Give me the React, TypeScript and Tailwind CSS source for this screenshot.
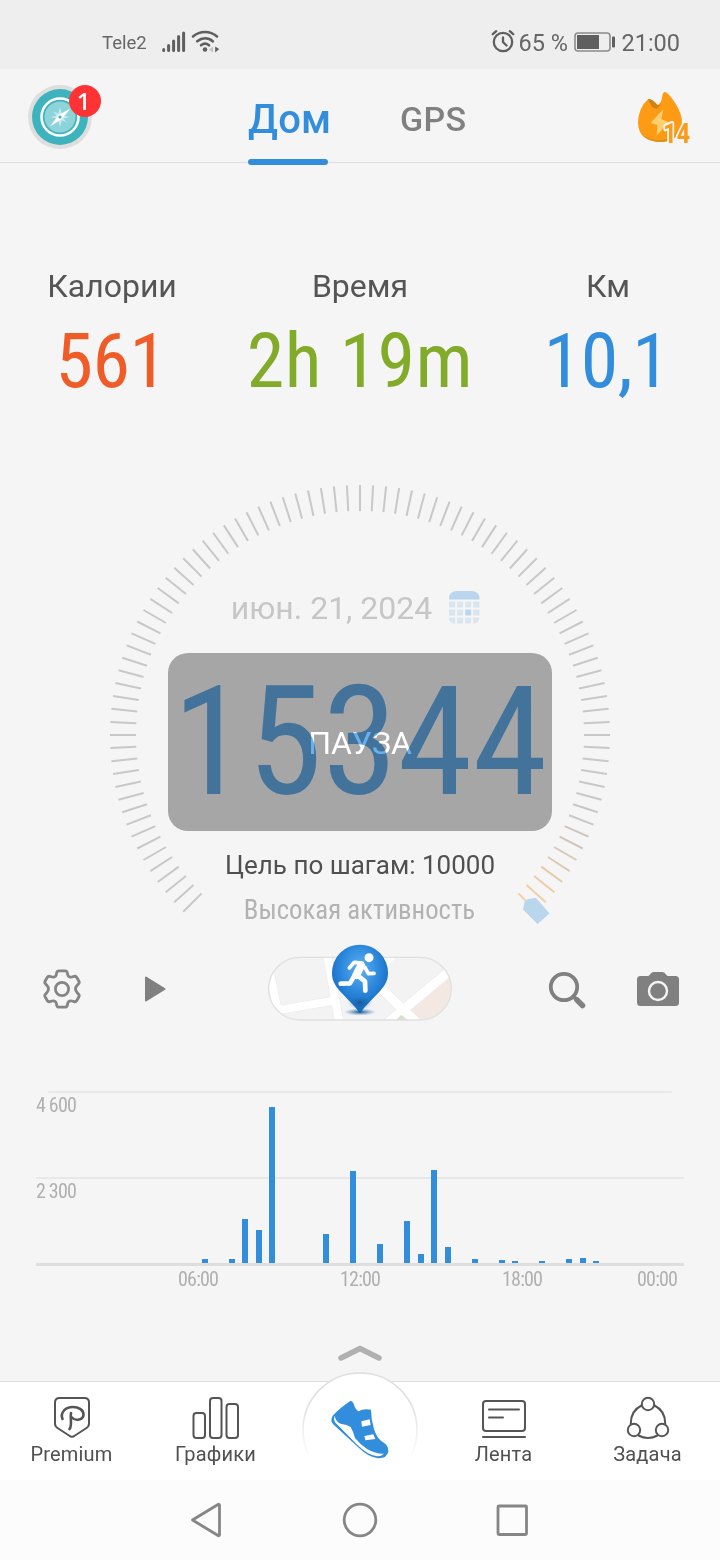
import React from 'react';

const TICKS = Array.from({ length: 91 }, (_, i) => -135 + i * 3);

// last ticks of the dial fade from grey to orange
const WARM = ['#cdc5be', '#d3c6b9', '#d8c8b5', '#dec9b1', '#e5cbad', '#ebcda9', '#f0cea6', '#f5d0a2'];

// half-hour slot -> bar height
const STEPS: Record<number, number> = {
  12: 4, 14: 4, 15: 44, 16: 33, 17: 156, 21: 29, 23: 92, 25: 19, 27: 42, 28: 9,
  29: 93, 30: 16, 32: 4, 34: 3, 35: 2, 37: 2, 39: 4, 40: 5, 41: 2,
};

const tickColor = (i: number) => (i > 82 ? WARM[i - 83] : '#c8c8c8');

const StatusBar = () => (
  <div className="flex h-[69px] bg-[#eeeeee] pt-[16px] text-[#666666]">
    <div className="flex h-[53px] w-full items-center pl-[102px] pr-[40px]">
      <span className="mt-[2px] w-[60px] text-[18.500px]">Tele2</span>
      <svg width="58" height="24" viewBox="0 0 58 24" className="-mt-[4px]">
        <g stroke="#5f5f5f" strokeWidth="3" strokeLinecap="round">
          <path d="M1.700 20.500v1M6.600 16.500v5M11.600 12v9.500M16.600 7.500v14M21.600 4v17.500" />
        </g>
        <g fill="none" stroke="#5f5f5f" strokeWidth="2.600" strokeLinecap="round">
          <path d="M31 7.500c7-6 17-6 24 0M35.200 12.300c5-4 11-4 15.600 0M39 16.300c2.600-2 5.600-2 8 0" />
        </g>
        <circle cx="43" cy="20.500" r="2.300" fill="#5f5f5f" />
        <path d="M51 17.500v6l-4-3z" fill="#c4c4c4" />
        <path d="M53.200 17.500v6l4-3.500z" fill="#5f5f5f" />
      </svg>
      <svg className="ml-auto -mt-[3px]" width="24" height="24" viewBox="0 0 24 24" fill="none" stroke="#5f5f5f" strokeWidth="2.300" strokeLinecap="round">
        <circle cx="12" cy="13" r="9.200" />
        <path d="M12 8.500v4.500l3.500 3.500M1.800 5.200l3.400-3M22.200 5.200l-3.400-3" />
      </svg>
      <span className="ml-[3px] w-[56px] whitespace-nowrap text-[23.500px] leading-[28px]">65 %</span>
      <svg className="-mt-[1px]" width="42" height="20" viewBox="0 0 42 20">
        <rect x="1" y="1" width="35" height="18" rx="3" fill="none" stroke="#8b8b8b" strokeWidth="1.600" />
        <rect x="3" y="3" width="22" height="14" fill="#5f5f5f" />
        <rect x="38" y="4.500" width="3" height="11" rx="1" fill="#5f5f5f" />
      </svg>
      <span className="ml-[5px] text-[23.500px] leading-[28px]">21:00</span>
    </div>
  </div>
);

const Avatar = () => (
  <svg width="76" height="68" viewBox="0 0 76 68">
    <circle cx="32" cy="34" r="32" fill="#dedede" />
    <circle cx="32" cy="34" r="28" fill="#3db3be" />
    <circle cx="32" cy="34" r="18.500" fill="#3db3be" stroke="#ffffff" strokeWidth="2.600" />
    <circle cx="32" cy="34" r="15.500" fill="#8cd4da" />
    <path d="M32 24.500l1.800 6 4.700-1.700-3 4 6 1.200-6 1.400 3 3.700-4.700-1.500-1.800 6.400-1.800-6.400-4.700 1.500 3-3.700-6-1.400 6-1.200-3-4 4.700 1.700z" fill="#c4eaed" />
    <path d="M42.500 25.500L34 36l-12 7.500L30.500 32z" fill="#ffffff" />
    <circle cx="32" cy="34" r="1.600" fill="#3db3be" />
    <circle cx="57" cy="18" r="16" fill="#ff3333" />
    <text x="55.500" y="26.500" textAnchor="middle" fontSize="24" fontWeight="600" fill="#ffffff" className="font-['Open_Sans']">1</text>
  </svg>
);

const Streak = () => (
  <svg width="56" height="62" viewBox="0 0 168 186">
    <path d="M87 9q10 2 30 32q21 32 21 60q-6 57-66 58q-64-3-66-58q1-45 31-71q10-2 28 18q12-7 14-27q1-11 8-12z" fill="#fd9b14" transform="translate(0 -6)" />
    <path d="M6 100q2 50 60 53q50 0 71-45q-8 50-65 51q-64-3-66-59z" fill="#dd921f" transform="translate(0 -6)" />
    <path d="M37 24q6 26 24 29q10-5 15-14q-6 5-11 4q-18-22-28-19z" fill="#cf8114" />
    <path d="M82 55l-38 40 20 7-2 32 36-40-22-10z" fill="#ffd070" />
    <text x="82" y="155" fontSize="84" fontWeight="800" textLength="80" lengthAdjust="spacingAndGlyphs" fill="#f89c1c" stroke="#f5f5f5" strokeWidth="12" strokeLinejoin="round" className="font-[Roboto] [paint-order:stroke]">14</text>
  </svg>
);

const Header = () => (
  <header className="flex h-[94px] border-b border-[#dedede] pl-[28px]">
    <div className="mt-[14px] w-[220px]">
      <Avatar />
    </div>
    <div className="flex h-[96px] w-[80px] flex-col justify-between whitespace-nowrap">
      <span className="mt-[27px] text-[40px] font-medium leading-[48px] tracking-[0.2px] text-[#328edc]">Дом</span>
      <span className="h-[6px] w-[80px] rounded-full bg-[#328edc]" />
    </div>
    <span className="ml-[72px] mt-[30px] w-[236px] text-[34px] font-medium leading-[40px] tracking-[0.3px] text-[#808080]">GPS</span>
    <div className="mt-[22px]">
      <Streak />
    </div>
  </header>
);

const Stat = ({ label, value, className }: { label: string; value: string; className: string }) => (
  <div className="flex flex-col items-center whitespace-nowrap">
    <span className="text-[32px] leading-[40px] text-[#555555]">{label}</span>
    <span className={`mt-[10px] font-['Roboto_Condensed'] text-[76px] leading-[90px] ${className}`}>{value}</span>
  </div>
);

const CalendarIcon = () => (
  <svg width="31" height="33" viewBox="0 0 31 33" className="-mt-[2px]">
    <path d="M0 8.500V8q0-8 8-8h14.500q8 0 8 8v.5z" fill="#bad6ed" />
    <g fill="#d9e5ef">
      <path d="M0 10.500h6.200v6H0zM8.200 10.500h6v6h-6zM16.200 10.500h6v6h-6zM24.200 10.500h6.300v6h-6.300zM0 18.500h6.200v6H0zM8.200 18.500h6v6h-6zM24.200 18.500h6.300v6h-6.300zM0 26.500h6.200v6q-6 0-6.200-6zM8.200 26.500h6v6h-6zM16.200 26.500h6v6h-6zM24.200 26.500h6.300q-.3 6-6.300 6z" />
    </g>
    <path d="M16.200 18.500h6v6h-6z" fill="#bad6ed" />
  </svg>
);

const Dial = () => (
  <section className="relative mx-auto flex h-[445px] w-[500px] flex-col items-center">
    <svg className="absolute inset-0" width="500" height="445" viewBox="0 0 500 445">
      {TICKS.map((deg, i) => (
        <line key={deg} x1="250" y1="0" x2="250" y2="26" stroke={tickColor(i)} strokeWidth="2" transform={`rotate(${deg} 250 250)`} />
      ))}
      <path d="M415 417l3-2.500 8-1 13 15-11.500 10-14-14z" fill="#bad6ed" stroke="#bad6ed" strokeWidth="1" />
    </svg>
    <div className="mt-[103px] flex items-center gap-[17px] whitespace-nowrap pr-[9px]">
      <span className="text-[32px] leading-[40px] text-[#c6c6c6]">июн. 21, 2024</span>
      <CalendarIcon />
    </div>
    <button className="relative mt-[25px] flex h-[178px] w-[384px] items-center justify-center rounded-[20px] bg-[#a6a6a6]">
      <span className="mt-[2px] text-[32px] text-white">ПАУЗА</span>
      <span className="absolute inset-x-0 top-0 text-center font-['Roboto_Condensed'] text-[152px] leading-[178px] text-[#67b1ee] mix-blend-multiply">
        15344
      </span>
    </button>
    <span className="mt-[18px] whitespace-nowrap text-[26px] leading-[32px] text-[#505050]">Цель по шагам: 10000</span>
    <span className="mt-[13px] whitespace-nowrap pr-[1px] font-['Roboto_Condensed'] text-[26.800px] leading-[32px] text-[#b2b2b2]">Высокая активность</span>
  </section>
);

const MapButton = () => (
  <svg width="200" height="90" viewBox="0 0 600 270">
    <defs>
      <clipPath id="pill"><rect x="26" y="52" width="548" height="188" rx="94" /></clipPath>
      <radialGradient id="pin" cx="0.5" cy="0.35" r="0.7">
        <stop offset="0" stopColor="#5fb2f2" />
        <stop offset="0.5" stopColor="#2b87dc" />
        <stop offset="1" stopColor="#0c5cb0" />
      </radialGradient>
      <radialGradient id="shade">
        <stop offset="0" stopColor="#0d3f73" stopOpacity="0.9" />
        <stop offset="1" stopColor="#2f80c8" stopOpacity="0" />
      </radialGradient>
    </defs>
    <rect x="26" y="52" width="548" height="188" rx="94" fill="#f3f3f3" />
    <g clipPath="url(#pill)">
      <path d="M448 212L580 104v140H478z" fill="#f3e9e2" />
      <g fill="none" stroke="#e9e9e9">
        <path d="M26 82l30 145M56 210l160-27M202 45l36 205" strokeWidth="28" />
        <path d="M572 90L386 246M350 132l124 120" strokeWidth="31" />
      </g>
      <g fill="none" stroke="#ffffff">
        <path d="M26 82l30 145M56 210l160-27M202 45l36 205" strokeWidth="25" />
        <path d="M572 90L386 246M350 132l124 120M350 90l50-50" strokeWidth="28" />
      </g>
      <path d="M402 246l22-22 22 22z" fill="#d5e2c5" />
    </g>
    <rect x="26" y="52" width="548" height="188" rx="94" fill="none" stroke="#e0e0e0" strokeWidth="4" />
    <ellipse cx="300" cy="216" rx="48" ry="11" fill="url(#shade)" />
    <path d="M300 14a84 84 0 0 1 84 86c0 45-40 62-84 120c-44-58-84-75-84-120a84 84 0 0 1 84-86z" fill="url(#pin)" />
    <ellipse cx="300" cy="188" rx="38" ry="22" fill="url(#shade)" opacity="0.6" />
    <circle cx="327" cy="53" r="13.500" fill="#ffffff" />
    <g fill="none" stroke="#ffffff" strokeLinecap="round" strokeLinejoin="round">
      <path d="M268 84l15-17 24 2M315 82l10 19 17-1" strokeWidth="11" />
      <path d="M303 77l-14 28" strokeWidth="24" />
      <path d="M284 106l-14 24-28 1M292 106l23 18 1 28" strokeWidth="14" />
    </g>
  </svg>
);

const Toolbar = () => (
  <div className="flex h-[100px] items-center pt-[18px]">
    <svg className="ml-[42px]" width="40" height="40" viewBox="0 0 40 40" fill="none" stroke="#858585" strokeWidth="2.800" strokeLinejoin="round">
      <path d="M14.600 4Q15 1.800 17 1.800h6Q25 1.800 25.400 4l.3 1.800q.3 1.600 1.800 2.100 1.100.4 2.500.1l2-.6q1.900-.5 2.800 1.100l2 3.500q1 1.700-.4 3l-1.200 1.300q-1.700 1.900-1.700 3.700t1.700 3.700l1.200 1.300q1.400 1.300.4 3l-2 3.500q-.9 1.600-2.800 1.100l-2-.6q-1.400-.3-2.500.1-1.500.5-1.800 2.100L25.400 36q-.4 2.200-2.400 2.200h-6q-2 0-2.400-2.200l-.3-1.800q-.3-1.600-1.800-2.100-1.100-.4-2.500-.1l-2 .6q-1.900.5-2.800-1.100l-2-3.500q-1-1.700.4-3l1.200-1.300q1.700-1.900 1.700-3.700t-1.700-3.700l-1.200-1.300q-1.400-1.300-.4-3l2-3.500q.9-1.600 2.800-1.100l2 .6q1.400.3 2.500-.1 1.500-.5 1.800-2.100z" />
      <circle cx="20" cy="20" r="6.600" />
    </svg>
    <svg className="ml-[61px]" width="24" height="28" viewBox="0 0 24 28">
      <path d="M3 2.500l18.500 11.500L3 25.500z" fill="#808080" stroke="#808080" strokeWidth="2" strokeLinejoin="round" />
    </svg>
    <div className="-mt-[9px] ml-[93px]">
      <MapButton />
    </div>
    <svg className="ml-[88px]" width="40" height="40" viewBox="0 0 40 40" fill="none" stroke="#808080">
      <circle cx="16" cy="18" r="13.200" strokeWidth="3.800" />
      <path d="M25 27l3 3" strokeWidth="4" />
      <path d="M29 31l5.500 5.500" strokeWidth="5.500" strokeLinecap="round" />
    </svg>
    <svg className="ml-[49px]" width="42" height="36" viewBox="0 0 42 36">
      <path d="M3.500 5h7q1.500 0 2.500-1.500Q14.300 1 16.500 1h9q2.200 0 3.500 2.500Q30 5 31.500 5h7Q42 5 42 8.500v23q0 3.500-3.500 3.500h-35Q0 35 0 31.500v-23Q0 5 3.500 5z" fill="#808080" />
      <circle cx="21" cy="20" r="9" fill="none" stroke="#f5f5f5" strokeWidth="2.400" />
    </svg>
  </div>
);

const Chart = () => (
  <section className="mx-[36px] mt-[61px] font-['Roboto_Condensed'] text-[20px] leading-[24px] tracking-[-0.800px] text-[#b0b0b0]">
    <div className="grid">
      <div className="col-start-1 row-start-1 h-[172px]">
        <div className="mx-[12px] h-[2px] rounded-full bg-[#e8e8e8]" />
        <p className="h-[84px]">4 600</p>
        <div className="h-[2px] bg-[#e8e8e8]" />
        <p>2 300</p>
      </div>
      <div className="col-start-1 row-start-1 flex h-[172px] items-end">
        {Array.from({ length: 48 }, (_, i) => (
          <div key={i} className="w-[13.500px] pl-[3.500px]">
            <div className="w-[6px] bg-[#328edc]" style={{ height: STEPS[i] ?? 0 }} />
          </div>
        ))}
      </div>
    </div>
    <div className="h-[3px] bg-[#dedede]" />
    <div className="mt-[1px] flex pl-[142px]">
      <span className="w-[162px]">06:00</span>
      <span className="w-[162px]">12:00</span>
      <span className="w-[135px]">18:00</span>
      <span>00:00</span>
    </div>
  </section>
);

const NavItem = ({ label, children }: { label: string; children: React.ReactNode }) => (
  <button className="flex w-[144px] flex-col items-center pt-[14px] text-[#505050]">
    <svg width="48" height="44" viewBox="-2 0 48 44" fill="none" stroke="#555555" strokeWidth="2" strokeLinecap="round" strokeLinejoin="round">
      {children}
    </svg>
    <span className="mt-[2px] pr-[1px] text-[20px] leading-[24px] tracking-[0.200px]">{label}</span>
  </button>
);

const Shoe = () => (
  <svg width="120" height="110" viewBox="0 0 360 330">
    <defs>
      <linearGradient id="rim" x1="0" y1="0" x2="0" y2="1">
        <stop offset="0" stopColor="#dedede" />
        <stop offset="0.3" stopColor="#e2e2e2" />
        <stop offset="0.75" stopColor="#ffffff" />
      </linearGradient>
    </defs>
    <circle cx="180" cy="195" r="171" fill="#ffffff" stroke="url(#rim)" strokeWidth="5" />
    <path d="M152 107q6 1 9 9q4 16 14 23q4 0 8-4q16-4 30-1q0 28 9 58q8 28 26 39q18 10 17 28q-4 22-30 21q-28-2-58-31l-76-70q-12-12-3-27q22-24 54-45z" fill="#328edc" />
    <path d="M104 152q4 20 20 25q18 2 28 9q8 14 13 33q16 20 36 33q26 15 51 14q-8 8-20 8q-28-2-62-36l-65-66q-6-10-1-20z" fill="#ffffff" />
    <path d="M184 169l25-6 3 17-26 5zM193 213l27-5 6 14-30 4z" fill="#ffffff" />
  </svg>
);

const BottomNav = () => (
  <nav className="relative flex h-[99px] border-t border-[#dedede] bg-white">
    <NavItem label="Premium">
      <path d="M9.500 2h25Q39 2 39 6.500v21q0 3-2.500 4.500L25 39.500q-3 2.500-6 0L7.500 32Q5 30.500 5 27.500v-21Q5 2 9.500 2z" />
      <path d="M12.500 23C10 17 15 11 23 11c6 0 10.500 3 10.500 7.500 0 5.500-8 7-11.500 3M21 17c-1 5 1.500 13-1.500 16" strokeWidth="2.600" />
    </NavItem>
    <NavItem label="Графики">
      <rect x="-.5" y="17" width="11.500" height="25" rx="3" />
      <rect x="16" y="2" width="11.500" height="40" rx="3" />
      <rect x="32.500" y="8" width="11.500" height="34" rx="3" />
    </NavItem>
    <div className="w-[144px]" />
    <NavItem label="Лента">
      <rect x="1" y="5" width="42" height="30" rx="3" />
      <path d="M7 13.500h30M7 21.500h14M1 41h42" />
    </NavItem>
    <NavItem label="Задача">
      <path d="M15.500 9.500Q4.500 15 4.800 28M28.500 9.500q11 5.500 10.700 18.500M12.500 39.500q9.500 5 19 0" />
      <circle cx="22" cy="8" r="6.200" />
      <circle cx="8" cy="34" r="6.200" />
      <circle cx="36" cy="34" r="6.200" />
    </NavItem>
    <div className="absolute left-[300px] top-[-17px]">
      <Shoe />
    </div>
  </nav>
);

const SystemNav = () => (
  <div className="flex h-[80px] items-center bg-[#fcfcfc]">
    <svg className="ml-[189px]" width="342" height="40" viewBox="0 0 342 40" fill="none" stroke="#868686" strokeWidth="2.800" strokeLinejoin="round">
      <path d="M3.500 20L29 4.500q1.500-.8 1.500 1v29q0 1.800-1.500 1z" />
      <circle cx="171" cy="20" r="15.800" />
      <rect x="309" y="6" width="28.500" height="28.500" rx="1" />
    </svg>
  </div>
);

export default function App() {
  return (
    <div className="flex h-[1560px] w-[720px] flex-col overflow-hidden bg-[#f5f5f5] font-[Roboto,sans-serif]">
      <StatusBar />
      <Header />
      <section className="grid h-[322px] grid-cols-[224px_272px_224px] pt-[103px]">
        <Stat label="Калории" value="561" className="pr-[2px] tracking-[-0.500px] text-[#f05c28]" />
        <Stat label="Время" value="2h 19m" className="tracking-[0.400px] text-[#82ab2a]" />
        <Stat label="Км" value="10,1" className="pr-[3px] tracking-[-0.500px] text-[#328edc]" />
      </section>
      <Dial />
      <Toolbar />
      <Chart />
      <div className="flex flex-1 items-end justify-center pb-[18px]">
        <svg width="48" height="20" viewBox="0 0 48 20" fill="none" stroke="#b0b0b0" strokeWidth="5.500" strokeLinecap="round" strokeLinejoin="round">
          <path d="M5 15L24 5.500l19 9.500" />
        </svg>
      </div>
      <BottomNav />
      <SystemNav />
    </div>
  );
}
